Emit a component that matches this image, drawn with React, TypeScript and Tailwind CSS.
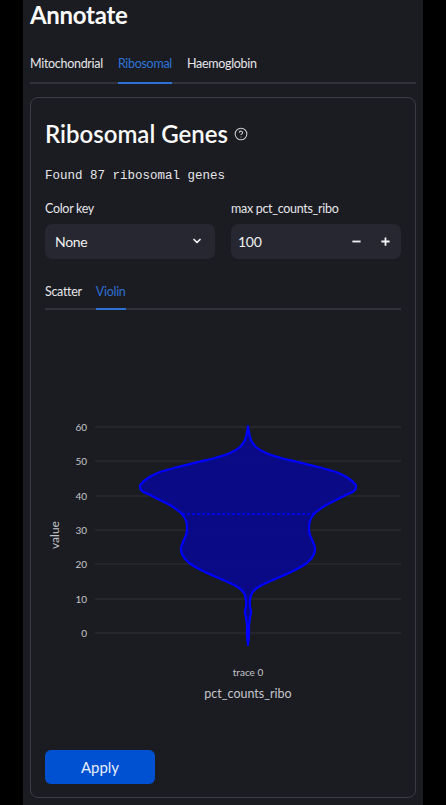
import React from 'react';

const sans = { fontFamily: 'Lato, "Noto Sans", sans-serif' };

// half-widths of the violin, [y, halfWidth] in page px (chart origin subtracted later)
const profile: [number, number][] = [
  [426, 0], [432, 1], [440, 3], [447, 8], [453, 18], [458, 33], [462, 50], [467, 70],
  [472, 88], [478, 100], [484, 107], [487, 108], [491, 106], [496, 96], [501, 86],
  [507, 75], [514, 66], [521, 62], [528, 61], [535, 62], [542, 65], [548, 67],
  [554, 66], [560, 62], [565, 56], [571, 45], [577, 32], [583, 18], [588, 9],
  [593, 4], [600, 2], [606, 2], [612, 3], [618, 2], [625, 1], [635, 1], [645, 0],
];

function smooth(pts: [number, number][]) {
  let d = `M${pts[0][0]},${pts[0][1]}`;
  for (let i = 0; i < pts.length - 1; i++) {
    const p0 = pts[i - 1] || pts[i];
    const p1 = pts[i];
    const p2 = pts[i + 1];
    const p3 = pts[i + 2] || p2;
    const c1 = [p1[0] + (p2[0] - p0[0]) / 6, p1[1] + (p2[1] - p0[1]) / 6];
    const c2 = [p2[0] - (p3[0] - p1[0]) / 6, p2[1] - (p3[1] - p1[1]) / 6];
    d += ` C${c1[0].toFixed(1)},${c1[1].toFixed(1)} ${c2[0].toFixed(1)},${c2[1].toFixed(1)} ${p2[0]},${p2[1]}`;
  }
  return d;
}

function violinPath(ox: number, oy: number, cx: number) {
  const right = profile.map(([y, w]) => [cx + w - ox, y - oy] as [number, number]);
  const left = [...profile].reverse().map(([y, w]) => [cx - w - ox, y - oy] as [number, number]);
  return smooth(right) + ' ' + smooth(left).replace(/^M/, 'L') + ' Z';
}

function ViolinChart() {
  // svg placed at page x=45, y=320
  const ox = 45;
  const oy = 320;
  const ticks = [
    { v: 60, y: 427 }, { v: 50, y: 461 }, { v: 40, y: 496 }, { v: 30, y: 530 },
    { v: 20, y: 564 }, { v: 10, y: 599 }, { v: 0, y: 633 },
  ];
  return (
    <svg width="356" height="400" viewBox="0 0 356 400" className="block">
      {ticks.map((t) => (
        <g key={t.v}>
          <line x1={95 - ox} x2={401 - ox} y1={t.y - oy} y2={t.y - oy} stroke="#303139" strokeWidth="1" />
          <text x={87 - ox} y={t.y - oy + 3.5} textAnchor="end" fontSize="10" fill="#c4c5cc" style={sans}>{t.v}</text>
        </g>
      ))}
      <path d={violinPath(ox, oy, 248)} fill="rgba(10,10,140,0.95)" stroke="#0000ff" strokeWidth="2.2" strokeLinejoin="round" />
      <line x1={182 - ox} x2={314 - ox} y1={514 - oy} y2={514 - oy} stroke="#0000ff" strokeWidth="1.5" strokeDasharray="3 2" />
      <text x={0} y={0} transform={`translate(${59 - ox},${535 - oy}) rotate(-90)`} textAnchor="middle" fontSize="12" fill="#c4c5cc" style={sans}>value</text>
      <text x={248 - ox} y={676 - oy} textAnchor="middle" fontSize="10" fill="#c4c5cc" style={sans}>trace 0</text>
      <text x={248 - ox} y={698 - oy} textAnchor="middle" fontSize="12.5" fill="#c4c5cc" style={sans}>pct_counts_ribo</text>
    </svg>
  );
}

export default function App() {
  return (
    <div className="min-h-screen bg-black flex justify-center" style={sans}>
      <div className="w-[400px] bg-[#1b1c21] px-[7px] pb-[10px]">
        <h1 className="text-[24px] font-bold tracking-[-0.3px] text-[#fafafa] leading-[30px]">Annotate</h1>

        <div className="mt-[25px] flex gap-[15px] border-b-2 border-[#30313a] text-[12.5px] tracking-[-0.3px] text-[#e6e6ea]">
          <div className="pb-[8px]">Mitochondrial</div>
          <div className="pb-[8px] -mb-[2px] border-b-2 border-[#2e6fd4] text-[#2e74d9]">Ribosomal</div>
          <div className="pb-[8px]">Haemoglobin</div>
        </div>

        <div className="mt-[13px] border border-[#3b3c44] rounded-[8px] px-[14px] pt-[18px] pb-[13px]">
          <div className="flex items-center gap-[6px]">
            <h2 className="text-[24px] font-semibold text-[#fafafa] leading-[36px]">Ribosomal Genes</h2>
            <svg width="14" height="14" viewBox="0 0 24 24" fill="none" stroke="#c9cad0" strokeWidth="1.8" strokeLinecap="round" className="mt-[1px]">
              <circle cx="12" cy="12" r="10" />
              <path d="M9.1 9a3 3 0 0 1 5.8 1c0 2-3 3-3 3" />
              <path d="M12 17h.01" />
            </svg>
          </div>

          <div className="mt-[15px] text-[12.5px] text-[#e6e6ea]" style={{ fontFamily: '"Liberation Mono", monospace' }}>
            Found 87 ribosomal genes
          </div>

          <div className="mt-[14px] grid grid-cols-2 gap-[16px]">
            <div>
              <div className="text-[12.5px] tracking-[-0.3px] text-[#e6e6ea] leading-[18px]">Color key</div>
              <div className="mt-[6px] h-[35px] rounded-[7px] bg-[#262730] flex items-center justify-between pl-[10px] pr-[12px]">
                <span className="text-[14px] tracking-[-0.3px] text-[#f0f0f2]">None</span>
                <svg width="12" height="12" viewBox="0 0 24 24" fill="none" stroke="#f0f0f2" strokeWidth="3.5" strokeLinecap="round" strokeLinejoin="round">
                  <path d="M6 9l6 6 6-6" />
                </svg>
              </div>
            </div>
            <div>
              <div className="text-[12.5px] tracking-[-0.3px] text-[#e6e6ea] leading-[18px]">max pct_counts_ribo</div>
              <div className="mt-[6px] h-[35px] rounded-[7px] bg-[#262730] flex items-center pl-[7px]">
                <span className="text-[14px] tracking-[-0.3px] text-[#f0f0f2] flex-1">100</span>
                <div className="w-[29px] flex justify-center text-[#f0f0f2]">
                  <svg width="11" height="11" viewBox="0 0 12 12"><path d="M1.5 6h9" stroke="#f0f0f2" strokeWidth="2" /></svg>
                </div>
                <div className="w-[29px] flex justify-center mr-[1px]">
                  <svg width="11" height="11" viewBox="0 0 12 12"><path d="M1.5 6h9M6 1.5v9" stroke="#f0f0f2" strokeWidth="2" /></svg>
                </div>
              </div>
            </div>
          </div>

          <div className="mt-[24px] flex gap-[14px] border-b-2 border-[#30313a] text-[12.5px] tracking-[-0.3px] text-[#e6e6ea]">
            <div className="pb-[7px]">Scatter</div>
            <div className="pb-[7px] -mb-[2px] border-b-2 border-[#2e6fd4] text-[#2e6fd4]">Violin</div>
          </div>

          <div className="mt-[10px]">
            <ViolinChart />
          </div>

          <button className="mt-[30px] w-[110px] h-[34px] rounded-[6px] bg-[#0050d2] text-[15px] text-[#e8eefc]">
            Apply
          </button>
        </div>
      </div>
    </div>
  );
}
